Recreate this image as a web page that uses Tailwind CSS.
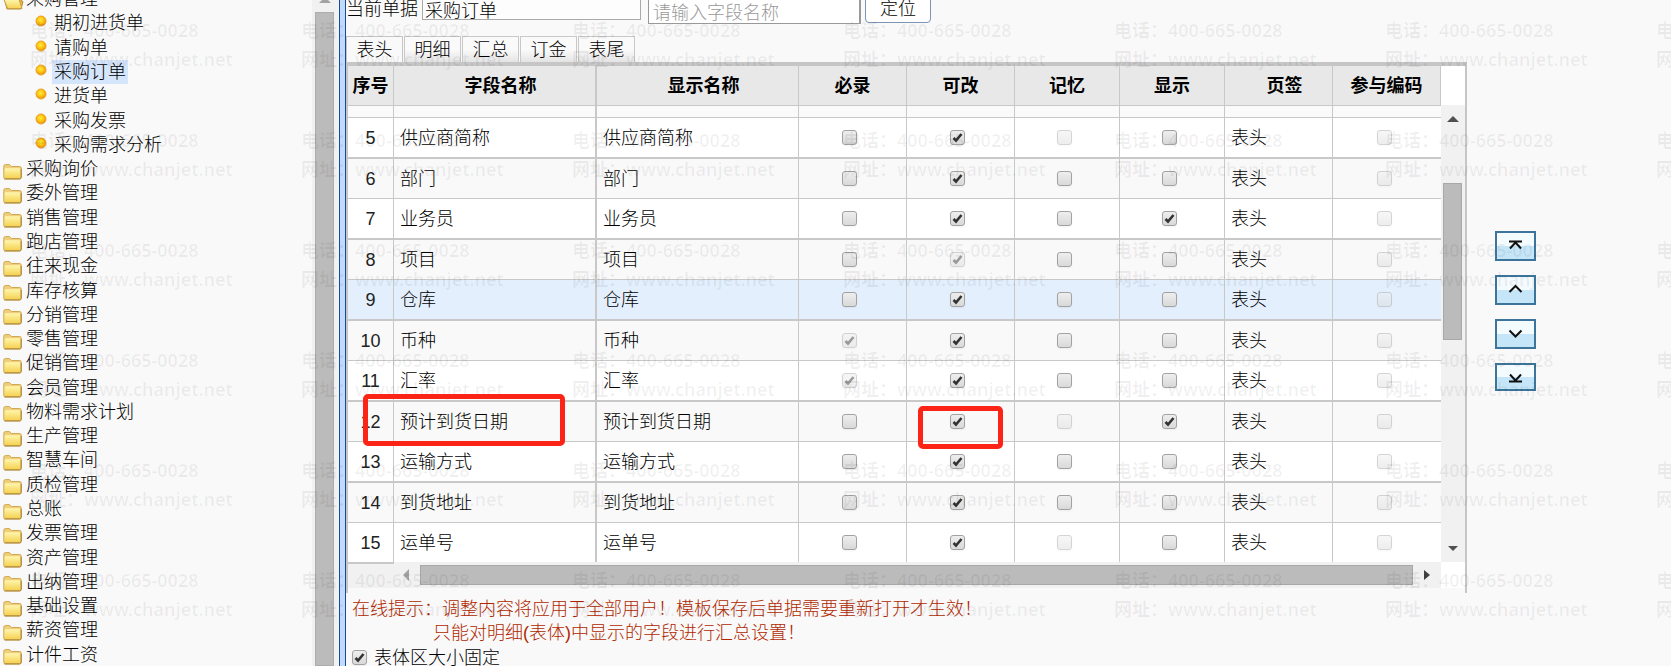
<!DOCTYPE html>
<html lang="zh-CN">
<head>
<meta charset="utf-8">
<title>采购订单</title>
<script src="https://cdn.jsdelivr.net/npm/@tailwindcss/browser@4"></script>
</head>
<body class="relative flex h-screen overflow-hidden bg-[#f9f9f9] font-['Liberation_Sans','Noto_Sans_CJK_SC',sans-serif] text-lg/6 font-light text-black">

<svg class="absolute size-0" aria-hidden="true">
  <defs>
    <linearGradient id="fold" x1="0" y1="0" x2="0" y2="1"><stop offset="0" stop-color="#fff6ae"/><stop offset="1" stop-color="#f5d253"/></linearGradient>
    <radialGradient id="ball" cx=".45" cy=".4" r=".6"><stop offset="0" stop-color="#ffe93a"/><stop offset=".55" stop-color="#fcc510"/><stop offset="1" stop-color="#e88a10"/></radialGradient>
    <symbol id="folder" viewBox="0 0 19 17">
      <path d="M.8 4.500V3.200Q.8 1.600 2.400 1.600h4.200L8.400 3.500h8.200q1.600 0 1.600 1.600v9.300q0 1.600-1.600 1.600H2.400Q.8 16 .8 14.400Z" fill="#f0cf7c" stroke="#cfa850"/>
      <path d="M1.600 6.200q0-1 1-1h13.600q1 0 1 1v7.600q0 1.200-1.200 1.200H2.800q-1.200 0-1.200-1.200Z" fill="url(#fold)"/>
      <path d="M1.500 15.900h15.200q1.400-.3 1.500-1.600V6" fill="none" stroke="#a98336"/>
    </symbol>
    <symbol id="folder-open" viewBox="0 0 21 17">
      <path d="M1 4.500V2.500h6l2 2h9v3l2 1-2 7.500H4Z" fill="#e3b54b" stroke="#b78c35"/>
      <path d="M1 6.500h15l3 9H4.500Z" fill="url(#fold)" stroke="#c99f45"/>
    </symbol>
    <symbol id="dot" viewBox="0 0 12 12"><circle cx="6" cy="6" r="5" fill="url(#ball)" stroke="#efa02a"/></symbol>
  </defs>
</svg>

<aside class="flex w-[339px] shrink-0">
  <nav id="tree" class="-mt-[13px] -mb-px flex flex-1 flex-col" aria-label="功能菜单"></nav>
  <div class="flex w-[27px] flex-col bg-[#f1f1f1] pl-[3px]">
    <svg class="ml-1 h-3 w-3" viewBox="0 0 12 12"><path d="M0 3 6-3l6 6Z" fill="#a3a3a3"/></svg>
    <div class="mr-[5px] flex-1 border border-[#adadad] bg-[#bbb]"></div>
  </div>
</aside>
<div class="w-[7px] shrink-0 border-x border-[#174a99] bg-[#c1d9fb]"></div>

<main class="flex min-w-0 flex-1">
  <div class="flex min-w-0 flex-1 flex-col *:shrink-0">
    <form class="flex h-9 items-start">
      <label for="doc" class="-mt-[3px] w-[76px] shrink-0 whitespace-nowrap">当前单据</label>
      <input id="doc" value="采购订单" class="-mt-2 h-7 w-[219px] border border-[#a9a9a9] bg-[#fdfdfd] px-[2px] pt-[5px] outline-none">
      <input aria-label="字段名称" placeholder="请输入字段名称" class="-mt-1 ml-[7px] h-7 w-[213px] border border-r-2 border-[#999] bg-white px-1 pt-[7px] outline-none placeholder:text-[#999]">
      <button type="button" class="-mt-2 ml-1 h-[31px] w-[66px] rounded-sm border border-[#7c94b5] bg-white pt-[2px]">定位</button>
    </form>
    <div class="flex h-[26px] gap-px" role="tablist">
      <button type="button" role="tab" aria-selected="true" class="w-[57px] border border-b-0 border-[#c4c4c4] bg-[#f9f9f9] leading-5">表头</button>
      <button type="button" role="tab" class="w-[57px] border border-b-0 border-[#c8c8c8] bg-linear-to-b from-[#fafafa] from-50% to-[#e4e4e4] leading-5">明细</button>
      <button type="button" role="tab" class="w-[57px] border border-b-0 border-[#c8c8c8] bg-linear-to-b from-[#fafafa] from-50% to-[#e4e4e4] leading-5">汇总</button>
      <button type="button" role="tab" class="w-[57px] border border-b-0 border-[#c8c8c8] bg-linear-to-b from-[#fafafa] from-50% to-[#e4e4e4] leading-5">订金</button>
      <button type="button" role="tab" class="w-[57px] border border-b-0 border-[#c8c8c8] bg-linear-to-b from-[#fafafa] from-50% to-[#e4e4e4] leading-5">表尾</button>
    </div>

    <div class="border-x-2 border-t-4 border-[#c6c6c6] pb-[5px]">
      <div class="flex">
        <table class="min-w-0 flex-1 table-fixed border-separate border-spacing-0">
          <colgroup>
            <col class="w-[46px]"><col class="w-[203px]"><col class="w-[202px]"><col class="w-[108px]"><col class="w-[108px]"><col class="w-[105px]"><col class="w-[105px]"><col class="w-[108px]"><col class="w-[108px]">
          </colgroup>
          <thead>
            <tr class="h-10 bg-[#e8e8e8] font-bold text-black *:border-r *:border-b *:border-[#c8c8c8] *:p-0">
              <th class="whitespace-nowrap">序号</th><th class="border-r-2! pl-3!">字段名称</th><th class="pl-3!">显示名称</th><th>必录</th><th>可改</th><th>记忆</th><th>显示</th><th class="pl-3!">页签</th><th>参与编码</th>
            </tr>
          </thead>
          <tbody id="rows"></tbody>
        </table>
        <div class="flex w-6 shrink-0 flex-col bg-white pt-[39px]">
          <div class="flex flex-1 flex-col items-center bg-[#f1f1f1] pt-[11px] pb-[11px]">
            <svg class="h-[6px] w-3" viewBox="0 0 12 6"><path d="M0 6 6 0l6 6Z" fill="#505050"/></svg>
            <div class="mt-[61px] mr-[2px] h-[157px] w-[19px] border border-[#a8a8a8] bg-[#bbb]"></div>
            <svg class="mt-auto h-[5px] w-[10px]" viewBox="0 0 10 5"><path d="M0 0h10L5 5Z" fill="#505050"/></svg>
          </div>
        </div>
      </div>
      <div class="flex h-[26px] bg-white">
        <div class="w-[46px] shrink-0 border-t-2 border-[#c8c8c8] bg-[#f1f1f1]"></div>
        <div class="flex flex-1 items-center bg-[#f1f1f1] pr-[11px] pl-[9px]">
          <svg class="h-3 w-[6px]" viewBox="0 0 6 12"><path d="M6 0v12L0 6Z" fill="#a3a3a3"/></svg>
          <div class="mx-[11px] h-5 flex-1 border border-[#a8a8a8] bg-[#bbb]"></div>
          <svg class="h-[10px] w-[6px]" viewBox="0 0 6 10"><path d="M0 0v10l6-5Z" fill="#404040"/></svg>
        </div>
        <div class="w-6 shrink-0"></div>
      </div>
    </div>

    <p class="mt-1 pl-[6px] text-[#b02800]">在线提示：调整内容将应用于全部用户！模板保存后单据需要重新打开才生效！</p>
    <p class="pl-[87px] text-[#b02800]">只能对明细(表体)中显示的字段进行汇总设置！</p>
    <label id="fixed" class="flex items-center gap-[7px] pt-px pl-[6px]"></label>
  </div>

  <div class="flex w-[204px] shrink-0 flex-col gap-[14px] pt-[231px] pl-7">
    <button type="button" aria-label="置顶" class="h-[30px] w-[41px] border-2 border-[#3c7599] bg-linear-to-b from-[#f4fbfe] from-50% to-[#c5e6f8] to-50% pl-[11px]"><svg class="h-[26px] w-[15px]" viewBox="0 0 15 26" fill="none" stroke="#111" stroke-width="2"><path d="M1 8.500h13M2 15.500l5.500-6 5.500 6"/></svg></button>
    <button type="button" aria-label="上移" class="h-[30px] w-[41px] border-2 border-[#3c7599] bg-linear-to-b from-[#f4fbfe] from-50% to-[#c5e6f8] to-50% pl-[11px]"><svg class="h-[26px] w-[15px]" viewBox="0 0 15 26" fill="none" stroke="#111" stroke-width="2"><path d="m1.500 15 6-6 6 6"/></svg></button>
    <button type="button" aria-label="下移" class="h-[30px] w-[41px] border-2 border-[#3c7599] bg-linear-to-b from-[#f4fbfe] from-50% to-[#c5e6f8] to-50% pl-[11px]"><svg class="h-[26px] w-[15px]" viewBox="0 0 15 26" fill="none" stroke="#111" stroke-width="2"><path d="m1.500 9.500 6 6 6-6"/></svg></button>
    <button type="button" aria-label="置底" class="h-[28px] w-[41px] border-2 border-[#3c7599] bg-linear-to-b from-[#f4fbfe] from-50% to-[#c5e6f8] to-50% pl-[11px]"><svg class="h-6 w-[15px]" viewBox="0 0 15 24" fill="none" stroke="#111" stroke-width="2"><path d="M1 16.500h13M2 9.500l5.500 6 5.500-6"/></svg></button>
  </div>
</main>

<div id="marks" aria-hidden="true" class="pointer-events-none absolute inset-0 grid grid-cols-[repeat(7,271px)] auto-rows-[110px] overflow-hidden pt-4 pl-[30px] font-['Noto_Sans','Noto_Sans_CJK_SC',sans-serif] text-lg/[29px] font-semibold whitespace-nowrap text-black/6"></div>

<script>
const box = (state, name, id) => {
  const checked = state.includes('c') ? ' checked' : '';
  const disabled = state.includes('d') ? ' disabled' : '';
  return `<span class="mb-[2px] inline-grid align-middle"><input type="checkbox"${id ? ` id="${id}"` : ''} aria-label="${name}"${checked}${disabled} class="peer col-start-1 row-start-1 size-[15px] appearance-none rounded-[3px] border border-[#a2a2a2] bg-linear-to-b from-[#eee] to-[#d9d9d9] shadow-xs disabled:opacity-45"><svg class="pointer-events-none col-start-1 row-start-1 hidden size-[15px] peer-checked:block peer-disabled:opacity-45" viewBox="0 0 15 15"><path d="M3.500 8 6 10.500 11.500 4" fill="none" stroke="#333" stroke-width="2.600"/></svg></span>`;
};

const children = ['期初进货单', '请购单', '采购订单', '进货单', '采购发票', '采购需求分析'];
const folders = ['采购询价', '委外管理', '销售管理', '跑店管理', '往来现金', '库存核算', '分销管理', '零售管理', '促销管理', '会员管理', '物料需求计划', '生产管理', '智慧车间', '质检管理', '总账', '发票管理', '资产管理', '出纳管理', '基础设置', '薪资管理', '计件工资'];
document.getElementById('tree').innerHTML =
  '<a href="#" class="flex min-h-0 flex-1 items-center gap-[2px] pl-[3px]"><svg class="mt-1 h-[17px] w-[21px]"><use href="#folder-open"/></svg>采购管理</a>' +
  children.map(t => `<a href="#" class="flex min-h-0 flex-1 items-center gap-[5px] pl-[35px]"><svg class="mb-1 size-3"><use href="#dot"/></svg><span class="${t === '采购订单' ? 'bg-[#d5e5fb] px-[2px]' : 'px-[2px]'}">${t}</span></a>`).join('') +
  folders.map(t => `<a href="#" class="flex min-h-0 flex-1 items-center gap-1 pl-[3px]"><svg class="mt-1 h-[17px] w-[19px]"><use href="#folder"/></svg>${t}</a>`).join('');

// Flags per row: required, editable, remembered, visible; c = checked, d = disabled.
const data = [
  [5, '供应商简称', '', 'c', 'd', ''],
  [6, '部门', '', 'c', '', ''],
  [7, '业务员', '', 'c', '', 'c'],
  [8, '项目', '', 'cd', '', ''],
  [9, '仓库', '', 'c', '', ''],
  [10, '币种', 'cd', 'c', '', ''],
  [11, '汇率', 'cd', 'c', '', ''],
  [12, '预计到货日期', '', 'c', 'd', 'c'],
  [13, '运输方式', '', 'c', '', ''],
  [14, '到货地址', '', 'c', '', ''],
  [15, '运单号', '', 'c', 'd', ''],
];
const cell = (state, name, extra = '') => `<td class="relative border-r pr-[6px]! text-center">${box(state, name)}${extra}</td>`;
document.getElementById('rows').innerHTML =
  '<tr class="h-3 bg-[#fafafa] *:border-r *:border-b *:border-[#c8c8c8] *:p-0"><td></td><td class="border-r-2!"></td><td></td><td></td><td></td><td></td><td></td><td></td><td class="border-r-0!"></td></tr>' +
  data.map(([n, t, a, b, c, d]) => {
    const tone = n === 9 ? 'h-[41px] bg-[#e3effd] *:border-b-2'
      : n === 15 ? 'h-[39px] bg-white'
      : n % 2 ? 'h-[41px] bg-white *:border-b-2' : 'h-10 bg-[#f9f9f9] *:border-b';
    const m1 = n === 12 ? '<span class="absolute -top-2 left-[15px] z-10 h-[52px] w-[202px] rounded-[5px] border-[5px] border-[#fb2416]"></span>' : '';
    const m2 = n === 12 ? '<span class="absolute top-1 left-[11px] z-10 h-[43px] w-[85px] rounded-[5px] border-[5px] border-[#fb2416]"></span>' : '';
    return `<tr class="${tone} *:border-[#c8c8c8] *:p-0"><td class="relative border-r text-center text-[#222]">${n}${m1}</td><td class="border-r-2 pl-[6px]!">${t}</td><td class="border-r pl-[6px]!">${t}</td>${cell(a, '必录')}${cell(b, '可改', m2)}${cell(c, '记忆')}${cell(d, '显示')}<td class="border-r pl-[6px]!">表头</td><td class="pr-[6px]! text-center">${box('d', '参与编码')}</td></tr>`;
  }).join('');

document.getElementById('fixed').innerHTML = box('c', '表体区大小固定', 'fix') + '表体区大小固定';
document.getElementById('marks').innerHTML = '<div>电话：400-665-0028<br>网址：www.chanjet.net</div>'.repeat(42);
</script>
</body>
</html>
